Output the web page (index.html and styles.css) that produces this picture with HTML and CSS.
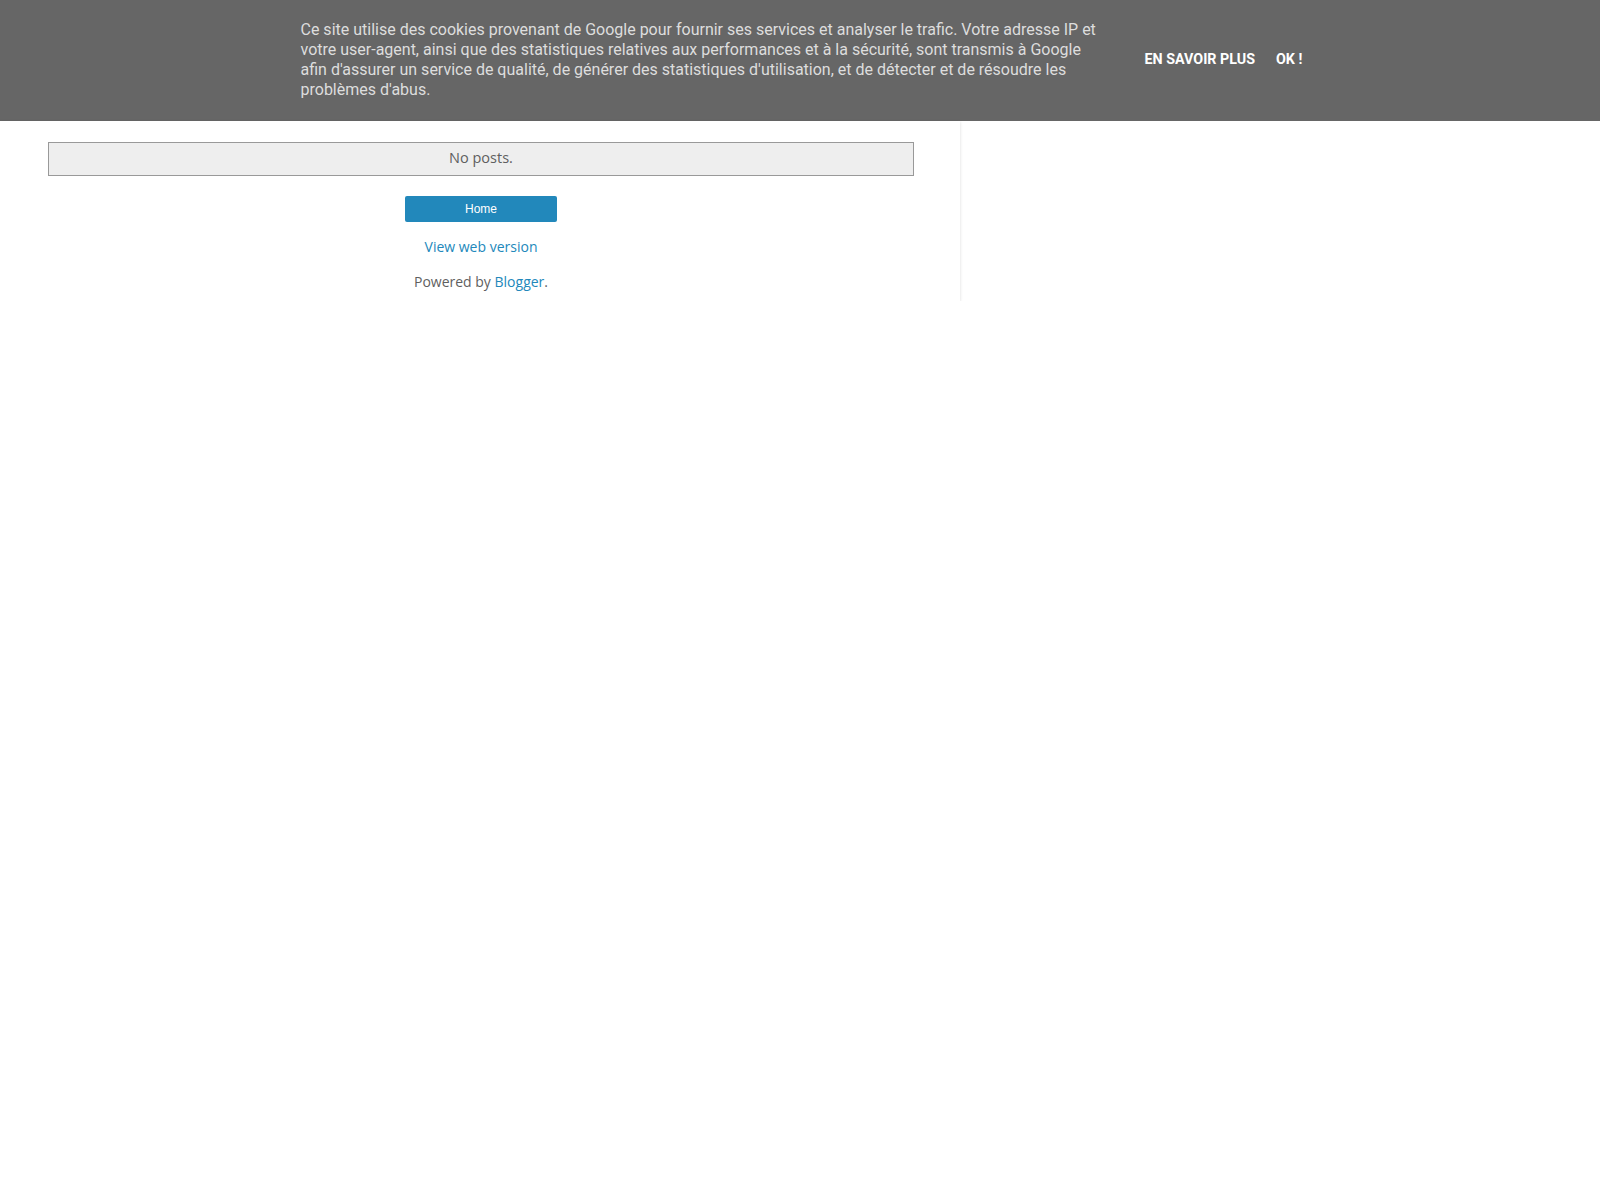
FILE: index.html
```html
<!DOCTYPE html>
<html lang="fr">
<head>
<meta charset="utf-8">
<title>Blog</title>
<link rel="stylesheet" href="styles.css">
</head>
<body>
<div class="cookie-bar">
  <span class="cookie-text">Ce site utilise des cookies provenant de Google pour fournir ses services et analyser le trafic. Votre adresse IP et votre user-agent, ainsi que des statistiques relatives aux performances et à la sécurité, sont transmis à Google afin d'assurer un service de qualité, de générer des statistiques d'utilisation, et de détecter et de résoudre les problèmes d'abus.</span>
  <span class="cookie-buttons">
    <a class="cookie-button" href="#">En savoir plus</a>
    <a class="cookie-button" href="#">OK !</a>
  </span>
</div>
<div class="panel">
  <div class="no-posts">No posts.</div>
  <div class="home-row"><a class="home-btn" href="#">Home</a></div>
  <div class="web-version"><a class="link" href="#">View web version</a></div>
  <div class="powered">Powered by <a class="link" href="#">Blogger</a>.</div>
</div>
</body>
</html>
```
FILE: styles.css
```css
html, body {
  margin: 0;
  padding: 0;
  background: #fff;
}
body {
  font-family: "Open Sans", "DejaVu Sans", sans-serif;
}
.cookie-bar {
  background: #666;
  display: flex;
  justify-content: center;
  align-items: center;
  padding: 20px 0 21px 3px;
  font-family: "Roboto", "Liberation Sans", sans-serif;
}
.cookie-text {
  width: 800px;
  color: #ddd;
  font-size: 16px;
  line-height: 20px;
  margin-right: 44px;
}
.cookie-buttons {
  display: flex;
  gap: 21px;
  width: 158px;
  margin-bottom: 2px;
}
.cookie-button {
  color: #fff;
  text-decoration: none;
  font-weight: bold;
  text-transform: uppercase;
  font-size: 14.3px;
  white-space: nowrap;
}
.panel {
  width: 960px;
  box-sizing: border-box;
  padding: 21px 46px 10px 48px;
  box-shadow: 0 1px 3px rgba(0,0,0,0.15);
  color: #5f5f5f;
  font-size: 14px;
}
.no-posts {
  background: #eee;
  border: 1px solid #999;
  text-align: center;
  padding: 6px 0 8px;
  line-height: 18px;
  font-size: 14.5px;
}
.home-row {
  display: flex;
  justify-content: center;
  margin-top: 20px;
}
.home-btn {
  display: block;
  width: 152px;
  height: 26px;
  line-height: 26px;
  background: #2288bb;
  color: #fff;
  border-radius: 2px;
  text-align: center;
  text-decoration: none;
  font-family: "Liberation Sans", sans-serif;
  font-size: 12px;
}
.web-version {
  text-align: center;
  margin-top: 16px;
  line-height: 18px;
}
.powered {
  text-align: center;
  margin-top: 17px;
  line-height: 18px;
}
.link {
  color: #2288bb;
  text-decoration: none;
}
```
